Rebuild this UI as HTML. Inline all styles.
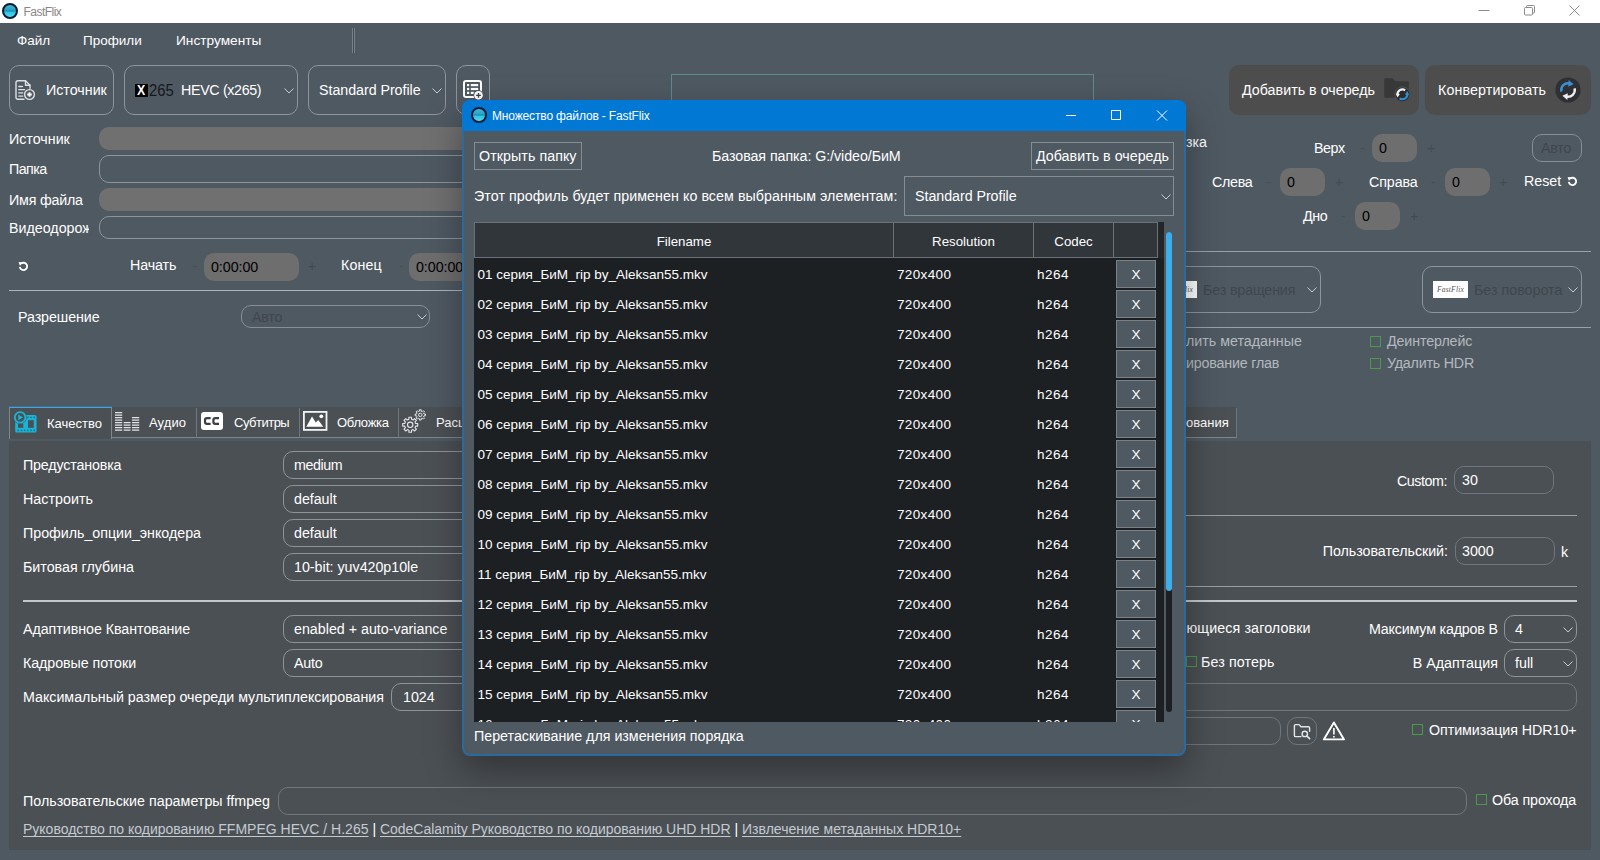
<!DOCTYPE html>
<html lang="ru"><head><meta charset="utf-8"><title>FastFlix</title>
<style>
html,body{margin:0;padding:0;width:1600px;height:860px;overflow:hidden;background:#4f5962;font-family:"Liberation Sans",sans-serif;}
.a{position:absolute;}
.t{position:absolute;font-size:14.25px;line-height:18px;height:18px;color:#fff;white-space:nowrap;}
.dim{color:#b4b9be;}
.dk{color:#3f464d;}
.mn{color:#474f56;}
.pl{color:#434b52;}
.blk{color:#000;}
.b{position:absolute;box-sizing:border-box;border:1px solid #8d949a;border-radius:10px;}
.f{background:#707070;border:none;}
.sq{border-radius:0;}
.seg{font-family:"Liberation Sans",sans-serif;}
a{color:#cfd6dc;}
.dlg{background:#4f5962;border-radius:8px;border:2px solid #2b6a9f;box-sizing:border-box;box-shadow:0 14px 36px 0 rgba(0,0,0,.35);}
.th{box-sizing:border-box;border:1px solid #6b7176;border-left:none;padding-top:1px;background:#31363b;color:#fff;font-size:13.3px;line-height:36px;text-align:center;}
.tt{font-size:13.5px;}
.xb{width:40px;height:28px;box-sizing:border-box;border:1px solid #7a8187;background:#4f5962;color:#fff;font-size:13.5px;line-height:27px;text-align:center;}
.orb{border-radius:50%;box-sizing:border-box;border:2px solid #0c1b35;background:linear-gradient(180deg,#3fb6d6 0%,#2ba5c7 40%,#1c8cae 50%,#33c6e4 62%,#48dcf4 100%);}
.logo{width:35px;height:17px;background:#fff;color:#555;font-family:"Liberation Serif",serif;font-style:italic;font-size:7.5px;line-height:17px;text-align:center;letter-spacing:.2px;}

</style></head>
<body>
<div class="a" style="left:0;top:0;width:1600px;height:23px;background:#fff"></div>
<div class="a orb" style="left:2px;top:3px;width:16px;height:16px"></div>
<div class="t " style="left:23.6px;top:2.5999999999999996px;color:#8a8688;font-size:12px;letter-spacing:-0.55px">FastFlix</div>
<svg class="a" style="left:1470px;top:0" width="130" height="23" viewBox="0 0 130 23"><g fill="none" stroke="#8a8a8a" stroke-width="1"><path d="M8.5 10.5 H19.5"/><rect x="54.5" y="7.5" width="8" height="7.5" rx="1"/><path d="M56.5 7 V6.5 Q56.5 5.5 57.5 5.5 H63.5 Q64.5 5.5 64.5 6.5 V12 Q64.5 13 63.5 13 H63"/><path d="M99.5 5.5 L109.5 15.5 M109.5 5.5 L99.5 15.5"/></g></svg>
<div class="t " style="left:17px;top:31.5px;font-size:13.5px">Файл</div>
<div class="t " style="left:83px;top:31.5px;font-size:13.5px">Профили</div>
<div class="t " style="left:176px;top:31.5px;font-size:13.7px">Инструменты</div>
<div class="a" style="left:352px;top:28px;width:3px;height:25px;border-left:1px solid #77818a;border-right:1px solid #77818a;background:#434b52;box-sizing:border-box"></div>
<div class="b " style="left:9px;top:65px;width:105px;height:50px;"></div>
<div class="t " style="left:46px;top:81px;">Источник</div>
<div class="b " style="left:124px;top:65px;width:174px;height:50px;"></div>
<div class="a" style="left:135px;top:83.5px;width:13px;height:13px;background:#000"></div>
<div class="t " style="left:137.4px;top:81.3px;font-size:15.4px;transform:scaleX(.8);transform-origin:0 50%"><b>X</b></div>
<div class="t " style="left:148.6px;top:81.8px;font-size:15.8px;transform:scaleX(.935);transform-origin:0 50%;color:#14181b">265</div>
<div class="t " style="left:181px;top:81px;letter-spacing:-0.334px;">HEVC (x265)</div>
<svg class="a" style="left:284px;top:88px" width="10" height="6" viewBox="0 0 10 6"><path d="M0.5 0.5 L5 5 L9.5 0.5" fill="none" stroke="#c8ccd0" stroke-width="1"/></svg>
<div class="b " style="left:308px;top:65px;width:138px;height:50px;"></div>
<div class="t " style="left:319px;top:81px;letter-spacing:-0.039px;">Standard Profile</div>
<svg class="a" style="left:432px;top:88px" width="10" height="6" viewBox="0 0 10 6"><path d="M0.5 0.5 L5 5 L9.5 0.5" fill="none" stroke="#c8ccd0" stroke-width="1"/></svg>
<div class="b " style="left:456px;top:65px;width:34px;height:50px;"></div>
<div class="b sq" style="left:671px;top:74px;width:423px;height:226px;border-color:#5f8a90"></div>
<div class="b " style="left:1229px;top:65px;width:190px;height:50px;background:#4d4d4d;border:none"></div>
<div class="t " style="left:1242px;top:81px;letter-spacing:0.017px;">Добавить в очередь</div>
<div class="b " style="left:1425px;top:65px;width:166px;height:50px;background:#4d4d4d;border:none"></div>
<div class="t " style="left:1438px;top:81px;letter-spacing:0.127px;">Конвертировать</div>
<div class="t " style="left:9px;top:130px;">Источник</div>
<div class="b f" style="left:99px;top:127px;width:601px;height:23px;"></div>
<div class="t " style="left:9px;top:160px;letter-spacing:-0.564px;">Папка</div>
<div class="b " style="left:99px;top:155px;width:601px;height:28px;"></div>
<div class="t " style="left:9px;top:191px;letter-spacing:-0.195px;">Имя файла</div>
<div class="b f" style="left:99px;top:188px;width:601px;height:23px;"></div>
<div class="t" style="left:9px;top:219px;width:80px;overflow:hidden">Видеодорожка</div>
<div class="b " style="left:99px;top:216px;width:601px;height:23px;"></div>
<div class="t " style="left:130px;top:256px;letter-spacing:-0.118px;">Начать</div>
<div class="t mn" style="left:193px;top:257px;">-</div>
<div class="b f" style="left:204px;top:253px;width:95px;height:28px;background:#6e6e6e"></div>
<div class="t blk" style="left:211px;top:258px;letter-spacing:-0.057px;color:#000">0:00:00</div>
<div class="t pl" style="left:308px;top:257px;">+</div>
<div class="t " style="left:341px;top:256px;letter-spacing:0.104px;">Конец</div>
<div class="t mn" style="left:399px;top:257px;">-</div>
<div class="b f" style="left:409px;top:253px;width:95px;height:28px;background:#6e6e6e"></div>
<div class="t blk" style="left:416px;top:258px;letter-spacing:-0.057px;color:#000">0:00:00</div>
<div class="a" style="left:9px;top:290px;width:691px;height:1px;background:#aeb4b9"></div>
<div class="t " style="left:18px;top:308px;letter-spacing:-0.077px;">Разрешение</div>
<div class="b " style="left:241px;top:305px;width:189px;height:23px;border-color:#878e94"></div>
<div class="t dk" style="left:252px;top:308px;letter-spacing:-0.218px;">Авто</div>
<svg class="a" style="left:416.5px;top:313.7px" width="10" height="6" viewBox="0 0 10 6"><path d="M0.5 0.5 L5 5 L9.5 0.5" fill="none" stroke="#c8ccd0" stroke-width="1"/></svg>
<div class="t " style="left:1186px;top:133px;">зка</div>
<div class="t " style="left:1314px;top:139px;letter-spacing:-0.407px;">Верх</div>
<div class="t mn" style="left:1360px;top:139px;">-</div>
<div class="b f" style="left:1372px;top:134px;width:45px;height:28px;background:#6e6e6e"></div>
<div class="t blk" style="left:1379px;top:139px;">0</div>
<div class="t pl" style="left:1427px;top:139px;">+</div>
<div class="b " style="left:1532px;top:134px;width:50px;height:28px;border-color:#878e94"></div>
<div class="t dk" style="left:1541px;top:139px;letter-spacing:-0.218px;">Авто</div>
<div class="t " style="left:1212px;top:173px;letter-spacing:-0.292px;">Слева</div>
<div class="t mn" style="left:1266px;top:173px;">-</div>
<div class="b f" style="left:1280px;top:168px;width:45px;height:28px;background:#6e6e6e"></div>
<div class="t blk" style="left:1287px;top:173px;">0</div>
<div class="t pl" style="left:1335px;top:173px;">+</div>
<div class="t " style="left:1369px;top:173px;letter-spacing:-0.079px;">Справа</div>
<div class="t mn" style="left:1431px;top:173px;">-</div>
<div class="b f" style="left:1445px;top:168px;width:45px;height:28px;background:#6e6e6e"></div>
<div class="t blk" style="left:1452px;top:173px;">0</div>
<div class="t pl" style="left:1499px;top:173px;">+</div>
<div class="t " style="left:1524px;top:172px;letter-spacing:-0.006px;">Reset</div>
<div class="t " style="left:1303px;top:207px;letter-spacing:-0.373px;">Дно</div>
<div class="t mn" style="left:1341px;top:207px;">-</div>
<div class="b f" style="left:1355px;top:202px;width:45px;height:28px;background:#6e6e6e"></div>
<div class="t blk" style="left:1362px;top:207px;">0</div>
<div class="t pl" style="left:1410px;top:207px;">+</div>
<div class="a" style="left:1100px;top:251px;width:491px;height:1px;background:#9aa0a6"></div>
<div class="b " style="left:1100px;top:266px;width:221px;height:47px;"></div>
<div class="t dk" style="left:1203px;top:281px;letter-spacing:-0.137px;">Без вращения</div>
<svg class="a" style="left:1307px;top:286.5px" width="10" height="6" viewBox="0 0 10 6"><path d="M0.5 0.5 L5 5 L9.5 0.5" fill="none" stroke="#c8ccd0" stroke-width="1"/></svg>
<div class="b " style="left:1422px;top:266px;width:160px;height:47px;"></div>
<div class="t dk" style="left:1474px;top:281px;letter-spacing:0.012px;">Без поворота</div>
<svg class="a" style="left:1568px;top:286.5px" width="10" height="6" viewBox="0 0 10 6"><path d="M0.5 0.5 L5 5 L9.5 0.5" fill="none" stroke="#c8ccd0" stroke-width="1"/></svg>
<div class="a" style="left:1100px;top:327px;width:491px;height:1px;background:#9aa0a6"></div>
<div class="t dim" style="left:1186px;top:332px;">лить метаданные</div>
<div class="t dim" style="left:1186px;top:354px;letter-spacing:-0.180px;">ирование глав</div>
<div class="a" style="left:1370px;top:336px;width:11px;height:11px;border:1px solid #4a9a4a;box-sizing:border-box"></div>
<div class="t dim" style="left:1387px;top:332px;letter-spacing:-0.106px;">Деинтерлейс</div>
<div class="a" style="left:1370px;top:358px;width:11px;height:11px;border:1px solid #4a9a4a;box-sizing:border-box"></div>
<div class="t dim" style="left:1387px;top:354px;letter-spacing:-0.204px;">Удалить HDR</div>
<div class="a" style="left:9px;top:407px;width:1227px;height:31px;background:#4b5054;border-bottom:1px solid #7f868c;box-sizing:border-box"></div>
<div class="a" style="left:9px;top:407px;width:103px;height:32px;background:#4b5054;border-top:1px solid #4aa3d6;border-left:1px solid #7f868c;border-right:1px solid #7f868c;box-sizing:border-box"></div>
<div class="a" style="left:9px;top:406px;width:103px;height:1px;background:#3a6f96"></div>
<div class="a" style="left:196px;top:408px;width:1px;height:30px;background:#6f777e"></div>
<div class="a" style="left:299px;top:408px;width:1px;height:30px;background:#6f777e"></div>
<div class="a" style="left:398px;top:408px;width:1px;height:30px;background:#6f777e"></div>
<div class="a" style="left:1236px;top:408px;width:1px;height:30px;background:#6f777e"></div>
<div class="t " style="left:47px;top:415px;letter-spacing:0.005px;font-size:13px">Качество</div>
<div class="t " style="left:149px;top:414px;letter-spacing:0.082px;font-size:13px">Аудио</div>
<div class="t " style="left:234px;top:414px;letter-spacing:-0.503px;font-size:13px">Субтитры</div>
<div class="t " style="left:337px;top:414px;letter-spacing:-0.281px;font-size:13px">Обложка</div>
<div class="t " style="left:436px;top:414px;font-size:13px">Расширенные</div>
<div class="t " style="left:1186px;top:414px;font-size:13px">ования</div>
<div class="a" style="left:9px;top:441px;width:1582px;height:409px;background:#4b5054"></div>
<div class="t " style="left:23px;top:456px;letter-spacing:-0.151px;">Предустановка</div>
<div class="b " style="left:283px;top:451px;width:417px;height:28px;"></div>
<div class="t " style="left:294px;top:456px;letter-spacing:-0.397px;">medium</div>
<div class="t " style="left:23px;top:490px;letter-spacing:0.046px;">Настроить</div>
<div class="b " style="left:283px;top:485px;width:417px;height:28px;"></div>
<div class="t " style="left:294px;top:490px;letter-spacing:-0.031px;">default</div>
<div class="t " style="left:23px;top:524px;letter-spacing:-0.016px;">Профиль_опции_энкодера</div>
<div class="b " style="left:283px;top:519px;width:417px;height:28px;"></div>
<div class="t " style="left:294px;top:524px;letter-spacing:-0.031px;">default</div>
<div class="t " style="left:23px;top:558px;letter-spacing:-0.001px;">Битовая глубина</div>
<div class="b " style="left:283px;top:553px;width:417px;height:28px;"></div>
<div class="t " style="left:294px;top:558px;letter-spacing:-0.010px;">10-bit: yuv420p10le</div>
<div class="t " style="left:23px;top:620px;letter-spacing:-0.042px;">Адаптивное Квантование</div>
<div class="b " style="left:283px;top:615px;width:417px;height:28px;"></div>
<div class="t " style="left:294px;top:620px;letter-spacing:0.005px;">enabled + auto-variance</div>
<div class="t " style="left:23px;top:654px;letter-spacing:-0.057px;">Кадровые потоки</div>
<div class="b " style="left:283px;top:649px;width:417px;height:28px;"></div>
<div class="t " style="left:294px;top:654px;letter-spacing:-0.188px;">Auto</div>
<div class="a" style="left:23px;top:600px;width:1554px;height:2px;background:#c4c8cc"></div>
<div class="t " style="left:23px;top:688px;letter-spacing:-0.012px;">Максимальный размер очереди мультиплексирования</div>
<div class="b " style="left:391px;top:683px;width:309px;height:28px;"></div>
<div class="t " style="left:403px;top:688px;">1024</div>
<div class="t " style="left:23px;top:792px;letter-spacing:0.019px;">Пользовательские параметры ffmpeg</div>
<div class="b " style="left:278px;top:787px;width:1189px;height:28px;border-color:#6f767c"></div>
<div class="t " style="left:23px;top:820px;font-size:14.0px;letter-spacing:0.001px;color:#c3cad1;text-decoration:underline;text-underline-offset:2px;text-decoration-skip-ink:none">Руководство по кодированию FFMPEG HEVC / H.265</div>
<div class="t " style="left:372.5px;top:820px;font-size:14px">|</div>
<div class="t " style="left:380px;top:820px;font-size:14.0px;letter-spacing:-0.025px;color:#c3cad1;text-decoration:underline;text-underline-offset:2px;text-decoration-skip-ink:none">CodeCalamity Руководство по кодированию UHD HDR</div>
<div class="t " style="left:734.5px;top:820px;font-size:14px">|</div>
<div class="t " style="left:742px;top:820px;font-size:14.0px;letter-spacing:0.014px;color:#c3cad1;text-decoration:underline;text-underline-offset:2px;text-decoration-skip-ink:none">Извлечение метаданных HDR10+</div>
<div class="t " style="left:1397.0px;top:472px;font-size:14.25px;letter-spacing:-0.426px;">Custom:</div>
<div class="b " style="left:1454px;top:466px;width:100px;height:28px;border-color:#6f767c"></div>
<div class="t " style="left:1462px;top:471px;">30</div>
<div class="a" style="left:1100px;top:515px;width:477px;height:1px;background:#9aa0a6"></div>
<div class="t " style="right:152px;top:542px;letter-spacing:-0.026px;">Пользовательский:</div>
<div class="b " style="left:1455px;top:537px;width:100px;height:28px;border-color:#6f767c"></div>
<div class="t " style="left:1462px;top:542px;">3000</div>
<div class="t " style="left:1561px;top:543px;">k</div>
<div class="a" style="left:1100px;top:586px;width:477px;height:1px;background:#9aa0a6"></div>
<div class="t " style="left:1186.5px;top:619px;font-size:14.25px;letter-spacing:0.119px;">ющиеся заголовки</div>
<div class="t " style="left:1369.0px;top:620px;font-size:14.25px;letter-spacing:-0.174px;">Максимум кадров B</div>
<div class="b " style="left:1504px;top:615px;width:73px;height:28px;"></div>
<div class="t " style="left:1515px;top:620px;">4</div>
<svg class="a" style="left:1563px;top:627px" width="10" height="6" viewBox="0 0 10 6"><path d="M0.5 0.5 L5 5 L9.5 0.5" fill="none" stroke="#c8ccd0" stroke-width="1"/></svg>
<div class="a" style="left:1186px;top:656px;width:11px;height:11px;border:1px solid #4a9a4a;box-sizing:border-box"></div>
<div class="t " style="left:1201px;top:653px;letter-spacing:0.119px;">Без потерь</div>
<div class="t " style="right:102px;top:654px;letter-spacing:0.025px;">B Адаптация</div>
<div class="b " style="left:1504px;top:649px;width:73px;height:28px;"></div>
<div class="t " style="left:1515px;top:654px;">full</div>
<svg class="a" style="left:1563px;top:661px" width="10" height="6" viewBox="0 0 10 6"><path d="M0.5 0.5 L5 5 L9.5 0.5" fill="none" stroke="#c8ccd0" stroke-width="1"/></svg>
<div class="b " style="left:1100px;top:683px;width:477px;height:28px;border-color:#6f767c"></div>
<div class="b " style="left:1100px;top:717px;width:181px;height:28px;border-color:#6f767c"></div>
<div class="b " style="left:1287px;top:717px;width:30px;height:28px;border-color:#6f767c"></div>
<div class="a" style="left:1412px;top:724px;width:11px;height:11px;border:1px solid #4a9a4a;box-sizing:border-box"></div>
<div class="t " style="left:1429px;top:721px;letter-spacing:-0.044px;">Оптимизация HDR10+</div>
<div class="a" style="left:1476px;top:794px;width:11px;height:11px;border:1px solid #4a9a4a;box-sizing:border-box"></div>
<div class="t " style="left:1492px;top:791px;letter-spacing:-0.093px;">Оба прохода</div>
<svg class="a" style="left:15px;top:80px" width="21" height="21" viewBox="0 0 21 21"><g fill="none" stroke="#dfe2e5" stroke-width="1.4" stroke-linecap="round" stroke-linejoin="round"><path d="M9 19.3 H3 Q1 19.3 1 17.3 V2.7 Q1 0.7 3 0.7 H10.5 L15 5.2 V8.2"/><path d="M10.5 0.7 V5.2 H15"/><path d="M3.8 6.5 H7.5 M3.8 9.7 H9.5 M3.8 12.9 H7.8 M3.8 16.1 H7.8" stroke-width="1.3"/><circle cx="14.5" cy="14.5" r="4.9"/><path d="M14.5 12.2 V16.8 M12.2 14.5 H16.8" stroke="#fff" stroke-width="1.9" stroke-linecap="butt"/></g></svg>
<svg class="a" style="left:463px;top:80px" width="22" height="20" viewBox="0 0 22 20"><rect x="1" y="1" width="17" height="16" rx="2" fill="none" stroke="#fff" stroke-width="2"/><g fill="#fff"><rect x="4" y="4" width="2.2" height="2.2"/><rect x="4" y="7.9" width="2.2" height="2.2"/><rect x="4" y="11.8" width="2.2" height="2.2"/><rect x="7.8" y="4" width="7.4" height="2.2"/><rect x="7.8" y="7.9" width="7.4" height="2.2"/><rect x="7.8" y="11.8" width="3" height="2.2"/></g><circle cx="15.5" cy="15.3" r="5" fill="#4f5962"/><circle cx="15.5" cy="15.3" r="4.3" fill="#fff"/><path d="M15.5 12.9 V17.7 M13.1 15.3 H17.9" stroke="#3a4249" stroke-width="1.3"/></svg>
<svg class="a" style="left:13px;top:410px" width="25" height="24" viewBox="0 0 25 24"><rect x="2.2" y="5" width="21.3" height="17.5" rx="1.5" fill="#19b5d8"/><rect x="5" y="13.8" width="5.3" height="4" fill="#4b5054"/><rect x="15" y="10.2" width="5.8" height="7.6" fill="#4b5054"/><g fill="#2a6f86"><rect x="14" y="6.6" width="1.6" height="1.6"/><rect x="17.2" y="6.6" width="1.6" height="1.6"/><rect x="20.4" y="6.6" width="1.6" height="1.6"/><rect x="4.4" y="19.6" width="1.6" height="1.6"/><rect x="7.6" y="19.6" width="1.6" height="1.6"/><rect x="10.8" y="19.6" width="1.6" height="1.6"/><rect x="14" y="19.6" width="1.6" height="1.6"/><rect x="17.2" y="19.6" width="1.6" height="1.6"/><rect x="20.4" y="19.6" width="1.6" height="1.6"/></g><circle cx="7.1" cy="7.4" r="6.6" fill="#4b5054"/><circle cx="7.1" cy="7.4" r="5.3" fill="none" stroke="#19b5d8" stroke-width="1.8"/><path d="M5.3 4.6 L10 7.4 L5.3 10.2 Z" fill="#19b5d8"/></svg>
<svg class="a" style="left:115px;top:412px" width="25" height="20" viewBox="0 0 25 20"><g fill="#e2e4e6"><rect x="0" y="0.0" width="7.2" height="1.25"/><rect x="0" y="2.5" width="7.2" height="1.25"/><rect x="0" y="5.0" width="7.2" height="1.25"/><rect x="0" y="7.5" width="7.2" height="1.25"/><rect x="0" y="10.0" width="7.2" height="1.25"/><rect x="0" y="12.5" width="7.2" height="1.25"/><rect x="0" y="15.0" width="7.2" height="1.25"/><rect x="0" y="17.5" width="7.2" height="1.25"/><rect x="8.7" y="10.0" width="6.8" height="1.25"/><rect x="8.7" y="12.5" width="6.8" height="1.25"/><rect x="8.7" y="15.0" width="6.8" height="1.25"/><rect x="8.7" y="17.5" width="6.8" height="1.25"/><rect x="17" y="5.0" width="7.2" height="1.25"/><rect x="17" y="7.5" width="7.2" height="1.25"/><rect x="17" y="10.0" width="7.2" height="1.25"/><rect x="17" y="12.5" width="7.2" height="1.25"/><rect x="17" y="15.0" width="7.2" height="1.25"/><rect x="17" y="17.5" width="7.2" height="1.25"/></g></svg>
<div class="a" style="left:201px;top:412px;width:22px;height:18px;background:#fff;border-radius:3px"></div>
<svg class="a" style="left:201px;top:412px" width="22" height="18" viewBox="0 0 22 18"><g fill="none" stroke="#3a3f44" stroke-width="2.2"><path d="M9.6 6.2 H6 Q4 6.2 4 8 V10 Q4 11.8 6 11.8 H9.6"/><path d="M18 6.2 H14.4 Q12.4 6.2 12.4 8 V10 Q12.4 11.8 14.4 11.8 H18"/></g></svg>
<svg class="a" style="left:303px;top:411px" width="25" height="20" viewBox="0 0 25 20"><rect x="0.9" y="0.9" width="22.6" height="18" fill="none" stroke="#f2f3f4" stroke-width="1.8"/><path d="M3.3 15.8 L9 5.6 L12.8 11.6 L15.2 9 L20.3 15.8 Z" fill="#fff"/><circle cx="18.3" cy="5.3" r="1.9" fill="#fff"/></svg>
<svg class="a" style="left:400px;top:407px" width="30" height="30" viewBox="0 0 30 30"><path d="M17.69 16.49 L17.69 19.11 L15.65 19.11 L14.97 20.73 L16.42 22.17 L14.57 24.02 L13.13 22.57 L11.51 23.25 L11.51 25.29 L8.89 25.29 L8.89 23.25 L7.27 22.57 L5.83 24.02 L3.98 22.17 L5.43 20.73 L4.75 19.11 L2.71 19.11 L2.71 16.49 L4.75 16.49 L5.43 14.87 L3.98 13.43 L5.83 11.58 L7.27 13.03 L8.89 12.35 L8.89 10.31 L11.51 10.31 L11.51 12.35 L13.13 13.03 L14.57 11.58 L16.42 13.43 L14.97 14.87 L15.65 16.49 Z" fill="none" stroke="#e6e8ea" stroke-width="1.1" stroke-linejoin="round"/><circle cx="10.2" cy="17.8" r="2.7" fill="none" stroke="#e6e8ea" stroke-width="1.1"/><path d="M25.42 7.01 L25.42 8.79 L24.00 8.79 L23.54 9.89 L24.55 10.89 L23.29 12.15 L22.29 11.14 L21.19 11.60 L21.19 13.02 L19.41 13.02 L19.41 11.60 L18.31 11.14 L17.31 12.15 L16.05 10.89 L17.06 9.89 L16.60 8.79 L15.18 8.79 L15.18 7.01 L16.60 7.01 L17.06 5.91 L16.05 4.91 L17.31 3.65 L18.31 4.66 L19.41 4.20 L19.41 2.78 L21.19 2.78 L21.19 4.20 L22.29 4.66 L23.29 3.65 L24.55 4.91 L23.54 5.91 L24.00 7.01 Z" fill="none" stroke="#e6e8ea" stroke-width="1.0" stroke-linejoin="round"/><circle cx="20.3" cy="7.9" r="1.7" fill="none" stroke="#e6e8ea" stroke-width="1.0"/></svg>
<svg class="a" style="left:1383px;top:76px" width="30" height="28" viewBox="0 0 30 28"><path d="M1.2 3.6 Q1.2 2.2 2.6 2.2 H9.6 L12.4 5.2 H24.4 Q25.8 5.2 25.8 6.6 V20.4 Q25.8 21.8 24.4 21.8 H2.6 Q1.2 21.8 1.2 20.4 Z" fill="#383838"/><circle cx="19.4" cy="18.3" r="8" fill="#4b4d4f"/><circle cx="19.4" cy="18.3" r="6.9" fill="#2a2b2d"/><path d="M14.6 19.2 A4.9 4.9 0 0 1 22.2 14.3" fill="none" stroke="#f2f3f4" stroke-width="2.1"/><path d="M12.7 17.6 L16.9 18 L14.6 21.4 Z" fill="#f2f3f4"/><path d="M24.2 17.2 A4.9 4.9 0 0 1 16.6 22.3" fill="none" stroke="#2f8fd2" stroke-width="2.1"/><path d="M26.1 18.8 L21.9 18.4 L24.2 15 Z" fill="#2f8fd2"/></svg>
<svg class="a" style="left:1555px;top:77px" width="26" height="26" viewBox="0 0 26 26"><circle cx="13" cy="13" r="12.6" fill="#2e3033"/><path d="M6.4 14.6 A6.8 6.8 0 0 1 14.6 6.4" fill="none" stroke="#3b8fd0" stroke-width="2.4"/><path d="M13.6 3 L18.6 7.2 L13.2 9.8 Z" fill="#3b8fd0"/><path d="M19.6 11.4 A6.8 6.8 0 0 1 11.4 19.6" fill="none" stroke="#eceef0" stroke-width="2.4"/><path d="M12.4 23 L7.4 18.8 L12.8 16.2 Z" fill="#eceef0"/></svg>
<svg class="a" style="left:17.5px;top:260.8px" width="11" height="11" viewBox="0 0 12 12"><path d="M3.3 2.9 A4 4 0 1 1 2 6.4" fill="none" stroke="#fff" stroke-width="2"/><path d="M0.6 1 L5.4 1.5 L2.1 5.3 Z" fill="#fff"/></svg>
<svg class="a" style="left:1566.5px;top:175.8px" width="11" height="11" viewBox="0 0 12 12"><path d="M3.3 2.9 A4 4 0 1 1 2 6.4" fill="none" stroke="#fff" stroke-width="2"/><path d="M0.6 1 L5.4 1.5 L2.1 5.3 Z" fill="#fff"/></svg>
<svg class="a" style="left:1293px;top:723px" width="19" height="17" viewBox="0 0 19 17"><g fill="none" stroke="#e4e6e8" stroke-width="1.4" stroke-linejoin="round" stroke-linecap="round"><path d="M8 13.6 H2.6 Q1.4 13.6 1.4 12.4 V2.8 Q1.4 1.6 2.6 1.6 H6 L8 3.8 H15.4 Q16.6 3.8 16.6 5 V8.2"/><circle cx="11.8" cy="10.9" r="2.7"/><path d="M13.9 13 L16.6 15.6" stroke-width="1.7"/></g></svg>
<svg class="a" style="left:1321px;top:719px" width="26" height="23" viewBox="0 0 26 23"><path d="M12.9 3.4 L23 20.4 H2.8 Z" fill="none" stroke="#fff" stroke-width="1.9" stroke-linejoin="round"/><path d="M12.9 9 V15.4 M12.9 17 V18.4" stroke="#fff" stroke-width="1.6"/></svg>
<div class="a logo" style="left:1433px;top:281px">FastFlix</div>
<div class="a logo" style="left:1162px;top:281px">FastFlix</div>
<div class="a dlg" style="left:462px;top:100px;width:724px;height:656px"></div>
<div class="a" style="left:462px;top:100px;width:724px;height:31px;background:#0078d4;border-radius:8px 8px 0 0"></div>
<div class="a orb" style="left:471px;top:107px;width:15.5px;height:15.5px"></div>
<div class="t " style="left:492px;top:107px;font-size:12px;letter-spacing:-0.15px">Множество файлов - FastFlix</div>
<svg class="a" style="left:1050px;top:100px" width="136" height="31" viewBox="0 0 136 31"><g fill="none" stroke="#fff" stroke-width="1"><path d="M16 15.5 H26"/><path d="M61.5 10.5 H70.5 V19.5 H61.5 Z"/><path d="M107 10.5 L117 20.5 M117 10.5 L107 20.5"/></g></svg>
<div class="b sq" style="left:474px;top:142px;width:108px;height:28px;border-color:#858c92"></div>
<div class="t " style="left:479px;top:147px;letter-spacing:0.058px;">Открыть папку</div>
<div class="t " style="left:712px;top:147px;letter-spacing:-0.065px;">Базовая папка: G:/video/БиМ</div>
<div class="b sq" style="left:1031px;top:142px;width:143px;height:28px;border-color:#858c92"></div>
<div class="t " style="left:1036px;top:147px;letter-spacing:0.017px;">Добавить в очередь</div>
<div class="t " style="left:474px;top:187px;letter-spacing:0.057px;">Этот профиль будет применен ко всем выбранным элементам:</div>
<div class="b sq" style="left:904px;top:176px;width:270px;height:40px;border-color:#858c92"></div>
<div class="t " style="left:915px;top:187px;letter-spacing:-0.039px;">Standard Profile</div>
<svg class="a" style="left:1161px;top:194px" width="10" height="6" viewBox="0 0 10 6"><path d="M0.5 0.5 L5 5 L9.5 0.5" fill="none" stroke="#c8ccd0" stroke-width="1"/></svg>
<div class="a" style="left:474px;top:222px;width:690px;height:500px;background:#1d2023;overflow:hidden">
<div class="a" style="left:0;top:0;width:690px;height:36px;background:#23272a"></div>
<div class="a th" style="left:0px;top:0;width:420px;height:36px;border-left:1px solid #6b7176">Filename</div>
<div class="a th" style="left:420px;top:0;width:140px;height:36px">Resolution</div>
<div class="a th" style="left:560px;top:0;width:80px;height:36px">Codec</div>
<div class="a th" style="left:640px;top:0;width:44px;height:36px"></div>
<div class="t tt" style="left:3.5px;top:44px">01 серия_БиМ_rip by_Aleksan55.mkv</div>
<div class="t tt" style="left:423px;top:44px;letter-spacing:.35px">720x400</div>
<div class="t tt" style="left:563px;top:44px;letter-spacing:.5px">h264</div>
<div class="a xb" style="left:642px;top:38px">X</div>
<div class="t tt" style="left:3.5px;top:74px">02 серия_БиМ_rip by_Aleksan55.mkv</div>
<div class="t tt" style="left:423px;top:74px;letter-spacing:.35px">720x400</div>
<div class="t tt" style="left:563px;top:74px;letter-spacing:.5px">h264</div>
<div class="a xb" style="left:642px;top:68px">X</div>
<div class="t tt" style="left:3.5px;top:104px">03 серия_БиМ_rip by_Aleksan55.mkv</div>
<div class="t tt" style="left:423px;top:104px;letter-spacing:.35px">720x400</div>
<div class="t tt" style="left:563px;top:104px;letter-spacing:.5px">h264</div>
<div class="a xb" style="left:642px;top:98px">X</div>
<div class="t tt" style="left:3.5px;top:134px">04 серия_БиМ_rip by_Aleksan55.mkv</div>
<div class="t tt" style="left:423px;top:134px;letter-spacing:.35px">720x400</div>
<div class="t tt" style="left:563px;top:134px;letter-spacing:.5px">h264</div>
<div class="a xb" style="left:642px;top:128px">X</div>
<div class="t tt" style="left:3.5px;top:164px">05 серия_БиМ_rip by_Aleksan55.mkv</div>
<div class="t tt" style="left:423px;top:164px;letter-spacing:.35px">720x400</div>
<div class="t tt" style="left:563px;top:164px;letter-spacing:.5px">h264</div>
<div class="a xb" style="left:642px;top:158px">X</div>
<div class="t tt" style="left:3.5px;top:194px">06 серия_БиМ_rip by_Aleksan55.mkv</div>
<div class="t tt" style="left:423px;top:194px;letter-spacing:.35px">720x400</div>
<div class="t tt" style="left:563px;top:194px;letter-spacing:.5px">h264</div>
<div class="a xb" style="left:642px;top:188px">X</div>
<div class="t tt" style="left:3.5px;top:224px">07 серия_БиМ_rip by_Aleksan55.mkv</div>
<div class="t tt" style="left:423px;top:224px;letter-spacing:.35px">720x400</div>
<div class="t tt" style="left:563px;top:224px;letter-spacing:.5px">h264</div>
<div class="a xb" style="left:642px;top:218px">X</div>
<div class="t tt" style="left:3.5px;top:254px">08 серия_БиМ_rip by_Aleksan55.mkv</div>
<div class="t tt" style="left:423px;top:254px;letter-spacing:.35px">720x400</div>
<div class="t tt" style="left:563px;top:254px;letter-spacing:.5px">h264</div>
<div class="a xb" style="left:642px;top:248px">X</div>
<div class="t tt" style="left:3.5px;top:284px">09 серия_БиМ_rip by_Aleksan55.mkv</div>
<div class="t tt" style="left:423px;top:284px;letter-spacing:.35px">720x400</div>
<div class="t tt" style="left:563px;top:284px;letter-spacing:.5px">h264</div>
<div class="a xb" style="left:642px;top:278px">X</div>
<div class="t tt" style="left:3.5px;top:314px">10 серия_БиМ_rip by_Aleksan55.mkv</div>
<div class="t tt" style="left:423px;top:314px;letter-spacing:.35px">720x400</div>
<div class="t tt" style="left:563px;top:314px;letter-spacing:.5px">h264</div>
<div class="a xb" style="left:642px;top:308px">X</div>
<div class="t tt" style="left:3.5px;top:344px">11 серия_БиМ_rip by_Aleksan55.mkv</div>
<div class="t tt" style="left:423px;top:344px;letter-spacing:.35px">720x400</div>
<div class="t tt" style="left:563px;top:344px;letter-spacing:.5px">h264</div>
<div class="a xb" style="left:642px;top:338px">X</div>
<div class="t tt" style="left:3.5px;top:374px">12 серия_БиМ_rip by_Aleksan55.mkv</div>
<div class="t tt" style="left:423px;top:374px;letter-spacing:.35px">720x400</div>
<div class="t tt" style="left:563px;top:374px;letter-spacing:.5px">h264</div>
<div class="a xb" style="left:642px;top:368px">X</div>
<div class="t tt" style="left:3.5px;top:404px">13 серия_БиМ_rip by_Aleksan55.mkv</div>
<div class="t tt" style="left:423px;top:404px;letter-spacing:.35px">720x400</div>
<div class="t tt" style="left:563px;top:404px;letter-spacing:.5px">h264</div>
<div class="a xb" style="left:642px;top:398px">X</div>
<div class="t tt" style="left:3.5px;top:434px">14 серия_БиМ_rip by_Aleksan55.mkv</div>
<div class="t tt" style="left:423px;top:434px;letter-spacing:.35px">720x400</div>
<div class="t tt" style="left:563px;top:434px;letter-spacing:.5px">h264</div>
<div class="a xb" style="left:642px;top:428px">X</div>
<div class="t tt" style="left:3.5px;top:464px">15 серия_БиМ_rip by_Aleksan55.mkv</div>
<div class="t tt" style="left:423px;top:464px;letter-spacing:.35px">720x400</div>
<div class="t tt" style="left:563px;top:464px;letter-spacing:.5px">h264</div>
<div class="a xb" style="left:642px;top:458px">X</div>
<div class="t tt" style="left:3.5px;top:494px">16 серия_БиМ_rip by_Aleksan55.mkv</div>
<div class="t tt" style="left:423px;top:494px;letter-spacing:.35px">720x400</div>
<div class="t tt" style="left:563px;top:494px;letter-spacing:.5px">h264</div>
<div class="a xb" style="left:642px;top:488px">X</div>
</div>
<div class="a" style="left:1166px;top:232px;width:6px;height:480px;background:#1d2023;border-radius:3px"></div>
<div class="a" style="left:1166px;top:232px;width:6px;height:359px;background:#3daee9;border-radius:3px"></div>
<div class="t " style="left:474px;top:727px;letter-spacing:-0.007px;">Перетаскивание для изменения порядка</div>
</body></html>
